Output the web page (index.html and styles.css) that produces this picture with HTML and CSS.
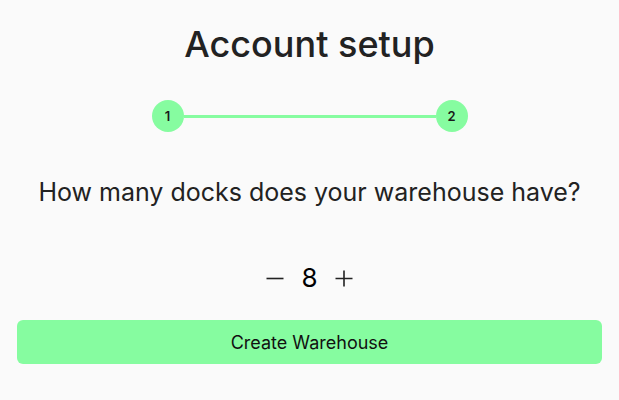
FILE: index.html
```html
<!DOCTYPE html>
<html lang="en">
<head>
    <meta charset="UTF-8">
    <meta name="viewport" content="width=device-width, initial-scale=1.0">
    <title>Account setup</title>
    <link rel="stylesheet" href="styles.css">
</head>
<body>
    <div class="container">
        <h1>Account setup</h1>
        <div class="steps">
            <div class="step">1</div>
            <div class="step-line"></div>
            <div class="step">2</div>
        </div>
        <p class="question">How many docks does your warehouse have?</p>
        <div class="counter">
            <button type="button" class="counter-btn" aria-label="Decrease">
                <svg width="18" height="18" viewBox="0 0 18 18"><path d="M0.5 9.5H17.5" stroke="#222" stroke-width="1.6" fill="none"/></svg>
            </button>
            <span class="counter-value">8</span>
            <button type="button" class="counter-btn" aria-label="Increase">
                <svg width="18" height="18" viewBox="0 0 18 18"><path d="M0.5 9.5H17.5M9 1.5V17.5" stroke="#222" stroke-width="1.6" fill="none"/></svg>
            </button>
        </div>
        <button type="button" class="submit">Create Warehouse</button>
    </div>
</body>
</html>
```

FILE: styles.css
```css
body {
    font-family: Inter, "Noto Sans", sans-serif;
    background-color: #fafafa;
    color: #222;
    margin: 0;
    padding: 0;
}
.container {
    padding: 20px 17px;
    display: flex;
    flex-direction: column;
    align-items: center;
}
h1 {
    font-size: 36px;
    font-weight: 500;
    margin: 2px 0 0;
    line-height: 44px;
}
.steps {
    display: flex;
    align-items: center;
    width: 316px;
    margin-top: 34px;
}
.step {
    width: 32px;
    height: 32px;
    border-radius: 50%;
    background: #86fca0;
    display: flex;
    align-items: center;
    justify-content: center;
    font-size: 13px;
    font-weight: 600;
    color: #1a1a1a;
    flex-shrink: 0;
}
.step-line {
    flex: 1;
    height: 3px;
    background: #86fca0;
}
.question {
    font-size: 25px;
    margin: 45px 0 0;
    line-height: 30px;
}
.counter {
    display: flex;
    align-items: center;
    gap: 17px;
    margin-top: 55px;
}
.counter-btn {
    background: none;
    border: none;
    padding: 0;
    display: flex;
    cursor: pointer;
}
.counter-value {
    font-size: 26px;
    line-height: 32px;
    color: #000;
}
.submit {
    width: 100%;
    height: 44px;
    margin-top: 26px;
    background: #86fca0;
    border: none;
    border-radius: 6px;
    font-family: inherit;
    font-size: 18px;
    color: #111;
    cursor: pointer;
}
```
